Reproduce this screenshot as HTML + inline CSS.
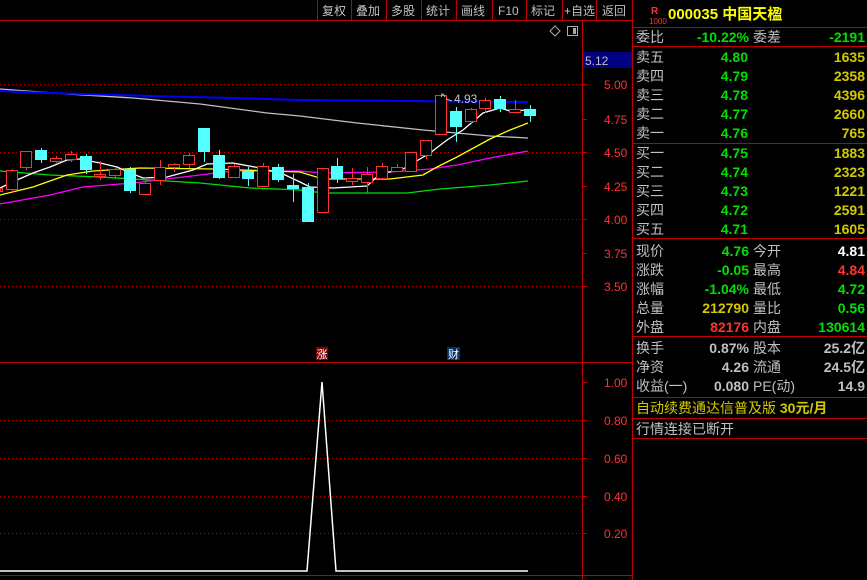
<!DOCTYPE html>
<html><head><meta charset="utf-8"><style>
body{margin:0;background:#000;width:867px;height:580px;overflow:hidden;font-family:"Liberation Sans","Noto Sans CJK SC",sans-serif}
svg{position:absolute;left:0;top:0}
text{font-family:"Liberation Sans","Noto Sans CJK SC",sans-serif}
</style></head><body>
<svg width="867" height="580" viewBox="0 0 867 580">
<g stroke="#c00000" stroke-width="1" shape-rendering="crispEdges">
<line x1="0" y1="20.5" x2="633" y2="20.5"/>
<line x1="582.5" y1="20" x2="582.5" y2="580"/>
<line x1="632.5" y1="0" x2="632.5" y2="580"/>
<line x1="0" y1="362.5" x2="633" y2="362.5"/>
<line x1="0" y1="575.5" x2="633" y2="575.5"/>
<line x1="317.5" y1="0" x2="317.5" y2="20"/><line x1="351.5" y1="0" x2="351.5" y2="20"/>
<line x1="386.5" y1="0" x2="386.5" y2="20"/><line x1="421.5" y1="0" x2="421.5" y2="20"/>
<line x1="456.5" y1="0" x2="456.5" y2="20"/><line x1="492.5" y1="0" x2="492.5" y2="20"/>
<line x1="526.5" y1="0" x2="526.5" y2="20"/><line x1="562.5" y1="0" x2="562.5" y2="20"/>
<line x1="596.5" y1="0" x2="596.5" y2="20"/>
<line x1="633" y1="27.5" x2="867" y2="27.5"/>
<line x1="633" y1="46.5" x2="867" y2="46.5"/>
<line x1="633" y1="143.5" x2="867" y2="143.5"/>
<line x1="633" y1="238.5" x2="867" y2="238.5"/>
<line x1="633" y1="336.5" x2="867" y2="336.5"/>
<line x1="633" y1="397.5" x2="867" y2="397.5"/>
<line x1="633" y1="418.5" x2="867" y2="418.5"/>
<line x1="633" y1="438.5" x2="867" y2="438.5"/>
<g>
<line x1="583" y1="84.5" x2="587" y2="84.5"/><line x1="583" y1="119.5" x2="587" y2="119.5"/><line x1="583" y1="152.5" x2="587" y2="152.5"/><line x1="583" y1="186.5" x2="587" y2="186.5"/><line x1="583" y1="219.5" x2="587" y2="219.5"/><line x1="583" y1="253.5" x2="587" y2="253.5"/><line x1="583" y1="286.5" x2="587" y2="286.5"/>
<line x1="583" y1="382.5" x2="587" y2="382.5"/><line x1="583" y1="420.5" x2="587" y2="420.5"/><line x1="583" y1="458.5" x2="587" y2="458.5"/><line x1="583" y1="496.5" x2="587" y2="496.5"/><line x1="583" y1="533.5" x2="587" y2="533.5"/>
</g>
</g>
<g stroke="#c00000" stroke-dasharray="1,3" shape-rendering="crispEdges">
<line x1="0" y1="84.5" x2="582" y2="84.5"/><line x1="0" y1="152.5" x2="582" y2="152.5"/><line x1="0" y1="219.5" x2="582" y2="219.5"/><line x1="0" y1="286.5" x2="582" y2="286.5"/>
<line x1="0" y1="420.5" x2="582" y2="420.5"/><line x1="0" y1="458.5" x2="582" y2="458.5"/><line x1="0" y1="496.5" x2="582" y2="496.5"/><line x1="0" y1="533.5" x2="582" y2="533.5"/>
</g>
<g fill="#c0c0c0" font-size="12">
<text x="322" y="15">复权</text><text x="356" y="15">叠加</text><text x="391" y="15">多股</text><text x="426" y="15">统计</text><text x="461" y="15">画线</text><text x="498" y="15">F10</text><text x="531" y="15">标记</text><text x="564" y="15">+自选</text><text x="602" y="15">返回</text>
</g>
<path d="M555 26 L560 31 L555 36 L550 31 Z" fill="none" stroke="#aaa"/>
<rect x="567.5" y="26.5" width="10" height="9" fill="none" stroke="#aaa"/><rect x="573" y="28" width="3" height="6" fill="#aaa"/>
<rect x="583" y="52" width="49" height="16" fill="#000080"/>
<text x="585" y="65" fill="#c0c0c0" font-size="12">5.12</text>
<g fill="#ff3232" font-size="12">
<text x="604" y="89">5.00</text><text x="604" y="124">4.75</text><text x="604" y="157">4.50</text><text x="604" y="191">4.25</text><text x="604" y="224">4.00</text><text x="604" y="258">3.75</text><text x="604" y="291">3.50</text>
<text x="604" y="387">1.00</text><text x="604" y="425">0.80</text><text x="604" y="463">0.60</text><text x="604" y="501">0.40</text><text x="604" y="538">0.20</text>
</g>
<g fill="none" stroke-width="1.3">
<polyline stroke="#c0c0c0" points="0,89 67,94 133,98 200,104 267,113 300,116 357,123 423,130 490,136 528,138"/>
<polyline stroke="#0000ff" stroke-width="2" points="0,91 50,93 150,96 233,98 300,100 528,102"/>
<polyline stroke="#00e000" points="0,171 50,175 100,177 150,180 200,183 250,188 300,190 323,193 407,193 440,189 490,185 528,181"/>
<polyline stroke="#ff00ff" points="0,204 50,195 83,187 133,183 183,177 233,171 300,171 323,173 390,172 430,169 457,165 490,158 528,151"/>
<polyline stroke="#ffff00" points="0,195 33,187 67,175 93,171 140,168 213,169 300,172 323,179 390,179 423,175 437,167 457,157 490,139 510,130 528,123"/>
<polyline stroke="#ffffff" points="0,188 17,180 33,173 50,167 67,160 80,159 100,163 117,167 133,174 143,178 167,177 193,170 207,164 233,163 260,168 283,174 300,182 310,187 333,188 367,186 380,174 403,169 430,153 447,140 463,130 483,113 500,108 510,111 528,110"/>
</g>
<g id="c" shape-rendering="crispEdges"></g>
<text x="454" y="103" fill="#c0c0c0" font-size="12">4.93</text>
<path d="M441 97 l2 -3 l2 3 M446 99 l6 2" stroke="#c0c0c0" fill="none"/>
<rect x="316" y="347" width="12" height="13" fill="#800000"/><text x="316.5" y="358" fill="#fff" font-size="11">涨</text>
<rect x="447" y="347" width="13" height="13" fill="#003366"/><text x="448" y="358" fill="#fff" font-size="11">财</text>
<polyline fill="none" stroke="#fff" stroke-width="1.5" points="0,571 307,571 322,382 336,571 528,571"/>
<g font-size="14">
<text x="651" y="14" fill="#ff3232" font-size="10" font-weight="bold">R</text>
<text x="649" y="24" fill="#ff3232" font-size="8">1000</text>
<text x="668" y="19" fill="#ffff00" font-size="15" font-weight="bold">000035 中国天楹</text>
<g fill="#c0c0c0">
<text x="636" y="42">委比</text><text x="753" y="42">委差</text>
<text x="636" y="62">卖五</text><text x="636" y="81">卖四</text><text x="636" y="100">卖三</text><text x="636" y="119">卖二</text><text x="636" y="138">卖一</text>
<text x="636" y="158">买一</text><text x="636" y="177">买二</text><text x="636" y="196">买三</text><text x="636" y="215">买四</text><text x="636" y="234">买五</text>
<text x="636" y="256">现价</text><text x="753" y="256">今开</text>
<text x="636" y="275">涨跌</text><text x="753" y="275">最高</text>
<text x="636" y="294">涨幅</text><text x="753" y="294">最低</text>
<text x="636" y="313">总量</text><text x="753" y="313">量比</text>
<text x="636" y="332">外盘</text><text x="753" y="332">内盘</text>
<text x="636" y="353">换手</text><text x="753" y="353">股本</text>
<text x="636" y="372">净资</text><text x="753" y="372">流通</text>
<text x="636" y="391">收益(一)</text><text x="753" y="391">PE(动)</text>
<text x="636" y="434">行情连接已断开</text>
<text x="749" y="353" text-anchor="end" font-weight="bold">0.87%</text><text x="865" y="353" text-anchor="end" font-weight="bold">25.2亿</text>
<text x="749" y="372" text-anchor="end" font-weight="bold">4.26</text><text x="865" y="372" text-anchor="end" font-weight="bold">24.5亿</text>
<text x="749" y="391" text-anchor="end" font-weight="bold">0.080</text><text x="865" y="391" text-anchor="end" font-weight="bold">14.9</text>
</g>
<text x="636" y="413" fill="#d4c800">自动续费通达信普及版 <tspan font-weight="bold">30元/月</tspan></text>
<g font-weight="bold" text-anchor="end">
<text x="749" y="42" fill="#00e000">-10.22%</text><text x="865" y="42" fill="#00e000">-2191</text>
<g fill="#00e000"><text x="748" y="62">4.80</text><text x="748" y="81">4.79</text><text x="748" y="100">4.78</text><text x="748" y="119">4.77</text><text x="748" y="138">4.76</text>
<text x="748" y="158">4.75</text><text x="748" y="177">4.74</text><text x="748" y="196">4.73</text><text x="748" y="215">4.72</text><text x="748" y="234">4.71</text></g>
<g fill="#d4c800"><text x="865" y="62">1635</text><text x="865" y="81">2358</text><text x="865" y="100">4396</text><text x="865" y="119">2660</text><text x="865" y="138">765</text>
<text x="865" y="158">1883</text><text x="865" y="177">2323</text><text x="865" y="196">1221</text><text x="865" y="215">2591</text><text x="865" y="234">1605</text></g>
<text x="749" y="256" fill="#00e000">4.76</text><text x="865" y="256" fill="#fff">4.81</text>
<text x="749" y="275" fill="#00e000">-0.05</text><text x="865" y="275" fill="#ff3232">4.84</text>
<text x="749" y="294" fill="#00e000">-1.04%</text><text x="865" y="294" fill="#00e000">4.72</text>
<text x="749" y="313" fill="#d4c800">212790</text><text x="865" y="313" fill="#00e000">0.56</text>
<text x="749" y="332" fill="#ff3232">82176</text><text x="865" y="332" fill="#00e000">130614</text>
</g>
</g>
</svg>
<script>
var d=[[0,2,188,191,188,191,1],[6,17,170,189,169,193,1],[20,31,151,167,151,170,1],[35,46,150,160,148,163,0],[50,61,158,161,156,163,1],[65,76,154,159,151,162,1],[80,91,156,170,154,174,0],[94,105,174,176,161,180,1],[109,120,169,175,167,179,1],[124,135,169,191,167,193,0],[139,150,183,194,177,194,1],[154,165,167,180,160,185,1],[168,179,164,167,163,172,1],[183,194,155,164,153,168,1],[198,209,128,152,128,162,0],[213,224,155,178,150,179,0],[228,239,166,177,164,178,1],[242,253,171,179,167,186,0],[257,268,166,186,163,187,1],[272,283,167,180,164,182,0],[287,298,185,189,174,202,0],[302,313,187,222,183,222,0],[317,328,168,212,168,213,1],[331,342,166,179,158,183,0],[346,357,178,181,168,185,1],[361,372,174,182,167,193,1],[376,387,166,178,163,179,1],[391,402,167,171,164,172,1],[405,416,152,171,152,171,1],[420,431,140,155,140,159,1],[435,446,95,134,93,134,1],[450,461,111,127,107,142,0],[465,476,109,121,108,123,1],[479,490,100,108,98,113,1],[494,505,99,109,96,112,0],[509,520,109,112,100,112,1],[524,535,109,116,105,122,0]];
var s='',N='http://www.w3.org/2000/svg';
d.forEach(function(c){var m=Math.round((c[0]+c[1])/2)+.5,r=c[6];var col=r?'#ff3232':'#54ffff';
s+='<line x1="'+m+'" y1="'+c[4]+'" x2="'+m+'" y2="'+c[2]+'" stroke="'+col+'"/><line x1="'+m+'" y1="'+c[3]+'" x2="'+m+'" y2="'+c[5]+'" stroke="'+col+'"/>';
if(r)s+='<rect x="'+(c[0]+.5)+'" y="'+(c[2]+.5)+'" width="'+(c[1]-c[0])+'" height="'+Math.max(1,c[3]-c[2])+'" fill="#000" stroke="'+col+'"/>';
else s+='<rect x="'+c[0]+'" y="'+c[2]+'" width="'+(c[1]-c[0]+1)+'" height="'+Math.max(1,c[3]-c[2])+'" fill="'+col+'"/>';});
document.getElementById('c').innerHTML=s;
</script>
</body></html>
